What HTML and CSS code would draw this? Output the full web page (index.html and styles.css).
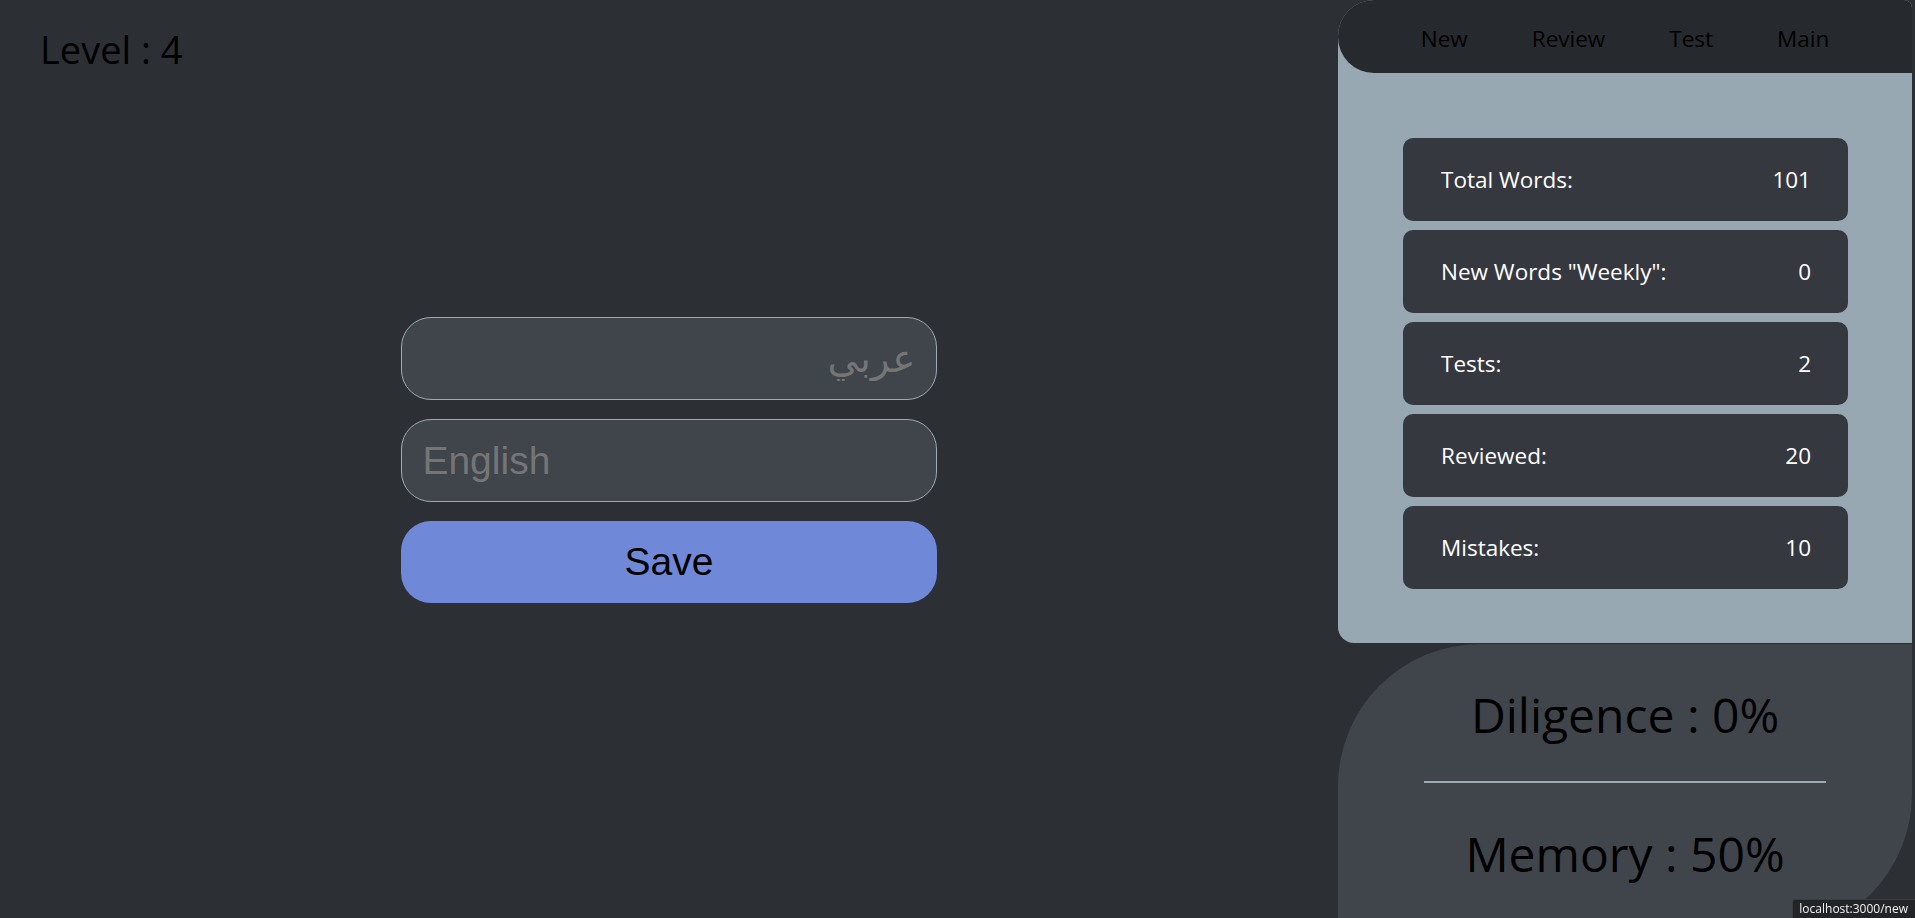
FILE: index.html
```html
<!DOCTYPE html>
<html lang="en">
<head>
<meta charset="utf-8">
<title>Words</title>
<link rel="stylesheet" href="styles.css">
</head>
<body>
<div class="app">
  <main class="main">
    <h1 class="level">Level : 4</h1>
    <form class="word-form">
      <input class="field" type="text" dir="rtl" placeholder="عربي">
      <input class="field" type="text" placeholder="English">
      <button class="save" type="button">Save</button>
    </form>
  </main>
  <aside class="side">
    <section class="stats">
      <nav class="nav">
        <a class="nav-link" href="#">New</a>
        <a class="nav-link" href="#">Review</a>
        <a class="nav-link" href="#">Test</a>
        <a class="nav-link" href="#">Main</a>
      </nav>
      <ul class="cards">
        <li class="card"><span>Total Words:</span><span>101</span></li>
        <li class="card"><span>New Words "Weekly":</span><span>0</span></li>
        <li class="card"><span>Tests:</span><span>2</span></li>
        <li class="card"><span>Reviewed:</span><span>20</span></li>
        <li class="card"><span>Mistakes:</span><span>10</span></li>
      </ul>
    </section>
    <section class="scores">
      <p class="score">Diligence : 0%</p>
      <hr class="divider">
      <p class="score">Memory : 50%</p>
    </section>
  </aside>
</div>
<div class="status">localhost:3000/new</div>
</body>
</html>
```
FILE: styles.css
```css
html, body {
  margin: 0;
  height: 100%;
}

body {
  background: #2c2f34;
  overflow: hidden;
  font-family: "Open Sans", "Noto Sans", sans-serif;
}

.app {
  display: flex;
  height: 918px;
}

.main {
  flex: 1;
  display: grid;
}

.level,
.word-form {
  grid-area: 1 / 1;
}

.level {
  align-self: start;
  margin: 0;
  padding: 20px 0 0 40px;
  font-size: 38px;
  font-weight: 400;
  line-height: 58px;
  color: #000;
}

.word-form {
  align-self: center;
  justify-self: center;
  width: 40%;
  margin-top: 2px;
  display: flex;
  flex-direction: column;
  gap: 19px;
}

.field {
  box-sizing: border-box;
  height: 83px;
  border: 1px solid #9eabb5;
  border-radius: 30px;
  background: #40444b;
  padding: 0 20px;
  font: 39px "Liberation Sans", "DejaVu Sans", sans-serif;
  color: #fff;
  outline: none;
}

.field::placeholder {
  color: #757575;
}

.save {
  height: 82px;
  border: 0;
  border-radius: 30px;
  background: #7088d8;
  color: #000;
  font: 39px "Liberation Sans", sans-serif;
  cursor: pointer;
}

.side {
  width: 574px;
  flex: none;
  margin-right: 3px;
  display: flex;
  flex-direction: column;
  gap: 1px;
}

.stats {
  background: #98a8b2;
  border-radius: 36px 8px 0 16px;
  padding-bottom: 54px;
}

.nav {
  box-sizing: border-box;
  height: 73px;
  padding-top: 4px;
  background: #26292d;
  border-radius: 36px 8px 0 36px;
  display: flex;
  justify-content: center;
  gap: 64px;
}

.nav-link {
  font-size: 22.5px;
  line-height: 69px;
  color: #000;
  text-decoration: none;
}

.cards {
  list-style: none;
  margin: 65px 0 0 65px;
  padding: 0;
  width: 445px;
  display: flex;
  flex-direction: column;
  gap: 9px;
}

.card {
  box-sizing: border-box;
  height: 83px;
  padding: 0 37px 0 38px;
  display: flex;
  align-items: center;
  justify-content: space-between;
  background: #363840;
  border-radius: 10px;
  color: #fff;
  font-size: 22.5px;
}

.scores {
  box-sizing: border-box;
  height: 292px;
  flex: none;
  padding-top: 41px;
  background: #40444b;
  border-radius: 142px 0 142px 0;
  text-align: center;
}

.score {
  margin: 0;
  font-size: 48px;
  line-height: 60px;
  color: #000;
}

.divider {
  width: 70%;
  height: 2px;
  border: 0;
  background: #9aa8b2;
  margin: 36px auto 41px;
}

.status {
  position: fixed;
  right: 0;
  bottom: 0;
  padding: 0 7px 0 6px;
  background: #232427;
  border-top: 1px solid #3a3c40;
  border-left: 1px solid #3a3c40;
  border-top-left-radius: 3px;
  color: #f2f2f2;
  font-size: 12px;
  line-height: 18px;
}
```
